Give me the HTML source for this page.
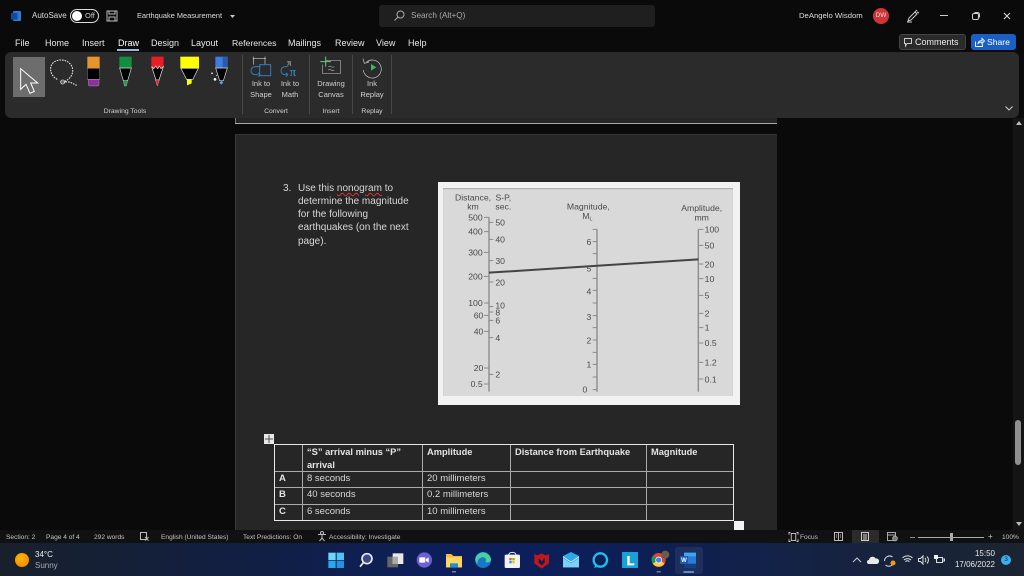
<!DOCTYPE html>
<html><head><meta charset="utf-8">
<style>
html,body{margin:0;padding:0;width:1024px;height:576px;overflow:hidden;background:#0a0a0a}
body{position:relative;font-family:"Liberation Sans",sans-serif;color:#ddd;filter:blur(.25px)}
.a,.t{position:absolute}
.t{white-space:nowrap;line-height:12px}
.tab{font-size:9px;top:37px;color:#e8e8e8}
.rb{font-size:7.5px;color:#d0d0d0;transform:translateX(-50%);text-align:center}
.st{font-size:6.6px;top:531.5px;color:#c4c4c4}
.b{font-size:10px;color:#d8d8d8;left:298px}
.c{position:absolute;font-size:9.5px;line-height:12px;color:#d8d8d8;white-space:nowrap}
.h{font-weight:bold;color:#e4e4e4}
svg{position:absolute;overflow:visible}
</style></head><body>

<!-- doc area -->
<div class="a" style="left:235px;top:118px;width:542px;height:5px;background:#262626;border-left:1px solid #777;box-sizing:border-box"></div>
<div class="a" style="left:235px;top:123px;width:542px;height:1px;background:#a8a8a8"></div>
<div class="a" style="left:235px;top:134px;width:542px;height:396px;background:#262626;border-left:1px solid #3a3a3a;border-top:1px solid #333;box-sizing:border-box"></div>

<!-- title bar -->
<svg style="left:10px;top:10px" width="12" height="12" viewBox="0 0 12 12"><rect x="3" y="1" width="8" height="10" rx="1" fill="#2b7cd3"/><rect x="1" y="3" width="6.5" height="6.5" fill="#134a9e"/></svg>
<div class="t" style="left:32px;top:10px;font-size:8px;color:#ddd">AutoSave</div>
<div class="a" style="left:70px;top:9px;width:29px;height:14px;border:1px solid #ddd;border-radius:8px;box-sizing:border-box"></div>
<div class="a" style="left:72px;top:11px;width:10px;height:10px;background:#fff;border-radius:50%"></div>
<div class="t" style="left:85px;top:10px;font-size:7.5px;color:#ccc">Off</div>
<svg style="left:106px;top:10px" width="12" height="12" viewBox="0 0 12 12" fill="none" stroke="#bbb"><rect x="1" y="1" width="10" height="10"/><rect x="3" y="1" width="6" height="3"/><rect x="3" y="7" width="6" height="4"/></svg>
<div class="t" style="left:137px;top:10px;font-size:7.4px;color:#ddd">Earthquake Measurement</div>
<svg style="left:230px;top:15px" width="5" height="3"><path d="M0 0h5L2.500 3z" fill="#ccc"/></svg>
<div class="a" style="left:379px;top:5px;width:276px;height:22px;background:#1f1f1f;border-radius:3px"></div>
<svg style="left:393px;top:10px" width="12" height="12" viewBox="0 0 12 12" fill="none" stroke="#aaa"><circle cx="7.500" cy="4.500" r="3.500"/><path d="M5 7L1.500 10.500"/></svg>
<div class="t" style="left:411px;top:10px;font-size:8.200px;color:#aaa">Search (Alt+Q)</div>
<div class="t" style="left:799px;top:10px;font-size:7.700px;color:#ddd">DeAngelo Wisdom</div>
<div class="a" style="left:873px;top:8px;width:16px;height:16px;border-radius:50%;background:#d13438;color:#f5dada;font-size:6.500px;line-height:16px;text-align:center">DW</div>
<svg style="left:906px;top:9px" width="14" height="14" viewBox="0 0 14 14" fill="none" stroke="#ccc"><path d="M2 12l1-3 6-6 2 2-6 6zM9 3l2-2M1 13h5M11 3l2 1"/></svg>
<div class="a" style="left:940px;top:15px;width:8px;height:1px;background:#ccc"></div>
<svg style="left:971px;top:11px" width="10" height="10" fill="none" stroke="#ccc"><rect x="1.500" y="2.500" width="6" height="6" rx="1.500"/><path d="M3.500 1.500h3a2 2 0 0 1 2 2v3"/></svg>
<svg style="left:1003px;top:12px" width="8" height="8" stroke="#ddd"><path d="M1 1l6 6M7 1L1 7"/></svg>

<!-- tabs -->
<div class="t tab" style="left:15px">File</div>
<div class="t tab" style="left:45px">Home</div>
<div class="t tab" style="left:82px">Insert</div>
<div class="t tab" style="left:118px;color:#fff">Draw</div>
<div class="a" style="left:117px;top:49px;width:22px;height:2px;background:#9db8e0"></div>
<div class="t tab" style="left:151px">Design</div>
<div class="t tab" style="left:191px">Layout</div>
<div class="t tab" style="left:232px;font-size:8.700px">References</div>
<div class="t tab" style="left:288px">Mailings</div>
<div class="t tab" style="left:335px">Review</div>
<div class="t tab" style="left:376px">View</div>
<div class="t tab" style="left:408px">Help</div>

<div class="a" style="left:899px;top:34px;width:67px;height:16px;background:#2a2a2a;border:1px solid #444;border-radius:3px;box-sizing:border-box"></div>
<svg style="left:904px;top:38px" width="9" height="9" fill="none" stroke="#ccc"><path d="M.5.500h7v5H3L1.500 8V5.500H.5z"/></svg>
<div class="t" style="left:915px;top:36px;font-size:9px;color:#eee">Comments</div>
<div class="a" style="left:971px;top:34px;width:45px;height:16px;background:#1b5fc4;border-radius:3px"></div>
<svg style="left:975px;top:38px" width="10" height="9" fill="none" stroke="#e8f0ff"><path d="M.5 3.500v5h7V6M3 5.500c0-2 2-3 4-3V.5l2.500 2.500L7 5.500V4C5 4 4 4.500 3 5.500z"/></svg>
<div class="t" style="left:987px;top:36px;font-size:8.600px;color:#fff">Share</div>

<!-- ribbon -->
<div class="a" style="left:5px;top:52px;width:1014px;height:66px;background:#2b2b2b;border-radius:6px"></div>
<div class="a" style="left:13px;top:57px;width:32px;height:40px;background:#6d6d6d"></div>
<svg style="left:0;top:50px" width="240" height="70" viewBox="0 0 720 210">
 <path d="M62 56L62 118L78 103L90 130L103 124L92 99L113 99z" fill="none" stroke="#fff" stroke-width="3"/>
 <path d="M172 88C150 78 146 50 160 38C178 22 214 30 218 58C220 74 208 90 190 96M196 96C210 94 216 100 230 106" fill="none" stroke="#eee" stroke-width="3" stroke-dasharray="5 3"/>
 <circle cx="188" cy="96" r="6" fill="none" stroke="#ddd" stroke-width="2.500"/><path d="M182 96h12" stroke="#ddd" stroke-width="2"/>
 <rect x="262" y="20" width="37" height="35" fill="#e6952a"/><rect x="262" y="55" width="37" height="33" fill="#000" stroke="#ccc" stroke-width="1"/><path d="M265 88h32v16a4 4 0 0 1-4 4h-24a4 4 0 0 1-4-4z" fill="#8e2fa0" stroke="#bbb"/>
 <rect x="358" y="20" width="37" height="34" fill="#0f8f3f"/><path d="M359 54h35l-11 38h-13z" fill="#000" stroke="#ddd" stroke-width="2"/><path d="M370 92h13l-4 16h-6z" fill="#17a34a" stroke="#ddd"/>
 <path d="M454 20h37v28l-9 10-5-8-5 8-6-8-6 8-6-6z" fill="#ea1c24"/><path d="M455 50l6 6 6-8 6 8 5-8 5 8 7-6-13 40h-9z" fill="#000" stroke="#eee" stroke-width="2"/><path d="M466 90h12l-6 18z" fill="#ea1c24" stroke="#ddd"/>
 <rect x="541" y="20" width="56" height="35" fill="#ff0"/><path d="M543 55h52l-16 32v1h-20v-1z" fill="#000" stroke="#ddd" stroke-width="2"/><path d="M561 88h14v12l-14 6z" fill="#ff0"/>
 <rect x="646" y="20" width="37" height="34" fill="#3b7de0"/><rect x="668" y="20" width="15" height="34" fill="#2c5aa8"/><path d="M647 54h35l-12 38h-11z" fill="#000" stroke="#ddd" stroke-width="2"/><path d="M664 92l6 6-6 6-6-6z" fill="#4aa3ff"/>
 <circle cx="645" cy="88" r="4" fill="#fff"/><circle cx="636" cy="70" r="2.500" fill="#fff"/><circle cx="650" cy="76" r="1.500" fill="#fff"/>
</svg>
<svg style="left:235px;top:50px" width="170" height="70" viewBox="0 0 510 210" fill="none">
 <path d="M53 25h40M56 20v24M90 20v24" stroke="#ccc" stroke-width="2"/>
 <rect x="74" y="44" width="33" height="33" stroke="#2f7fc0" stroke-width="3"/>
 <path d="M76 50H60a10 10 0 0 0 0 24h10M70 68l5 6-5 6" stroke="#2f7fc0" stroke-width="3"/>
 <text x="156" y="46" font-family="Liberation Serif" font-size="26" fill="#ddd">π</text>
 <text x="164" y="78" font-family="Liberation Serif" font-size="38" fill="#2f9fe0">π</text>
 <path d="M158 50h-8a10 10 0 0 0 0 24h8M153 68l5 6-5 6" stroke="#2f7fc0" stroke-width="3"/>
 <path d="M272 32h45v38h-55V44" stroke="#aaa" stroke-width="2"/>
 <path d="M272 20v30M256 35h32" stroke="#5fd07a" stroke-width="3"/>
 <path d="M280 50c6-6 10 6 18 0M280 60c6-6 10 6 18 0" stroke="#aaa" stroke-width="2"/>
 <path d="M395 36a27 27 0 1 1-10 24M384 26l4 14 14-4" stroke="#ccc" stroke-width="2"/>
 <path d="M408 42l16 10-16 10z" fill="#3fb860"/>
</svg>
<div class="a" style="left:242px;top:55px;width:1px;height:59px;background:#484848"></div>
<div class="a" style="left:309px;top:55px;width:1px;height:59px;background:#484848"></div>
<div class="a" style="left:352px;top:55px;width:1px;height:59px;background:#484848"></div>
<div class="a" style="left:391px;top:55px;width:1px;height:59px;background:#484848"></div>
<div class="t rb" style="left:261px;top:79px;line-height:10.500px">Ink to<br>Shape</div>
<div class="t rb" style="left:290px;top:79px;line-height:10.500px">Ink to<br>Math</div>
<div class="t rb" style="left:331px;top:79px;line-height:10.500px">Drawing<br>Canvas</div>
<div class="t rb" style="left:372px;top:79px;line-height:10.500px">Ink<br>Replay</div>
<div class="t rb" style="left:125px;top:106px;font-size:6.800px">Drawing Tools</div>
<div class="t rb" style="left:276px;top:106px;font-size:6.800px">Convert</div>
<div class="t rb" style="left:331px;top:106px;font-size:6.800px">Insert</div>
<div class="t rb" style="left:372px;top:106px;font-size:6.800px">Replay</div>
<svg style="left:1005px;top:106px" width="8" height="5" fill="none" stroke="#ccc"><path d="M.5.500L4 4 7.500.5"/></svg>

<!-- numbered text -->
<div class="t b" style="left:283px;top:183px">3.</div>
<div class="t b" style="top:183px">Use this <span style="text-decoration:underline wavy #d33 1px">nonogram</span> to</div>
<div class="t b" style="top:196px">determine the magnitude</div>
<div class="t b" style="top:209px">for the following</div>
<div class="t b" style="top:222px">earthquakes (on the next</div>
<div class="t b" style="top:236px">page).</div>

<!-- nomogram -->
<div class="a" style="left:438px;top:182px;width:302px;height:223px;background:#f2f2f2"></div>
<div class="a" style="left:443px;top:188px;width:290px;height:208px;background:#d9d9d9;box-shadow:inset 0 1px 1px #aaa"></div>
<svg style="left:430px;top:175px;filter:blur(.3px)" width="320" height="240" viewBox="0 0 960 720" font-family="Liberation Sans" font-size="26" fill="#4a4a4a">
 <g stroke="#8a8a8a" stroke-width="3" fill="none"><path d="M177 127V650M501 163V650M805 163V650" stroke-width="4"/>
 <path d="M162 127h15M162 170h15M162 232h15M162 304h15M162 384h15M162 421h15M162 469h15M162 579h15M162 627h15"/>
 <path d="M177 142h13M177 193h13M177 257h13M177 321h13M177 395h13M177 411h13M177 436h13M177 488h13M177 598h13"/>
 <path d="M488 163h13M488 200h13M488 236h13M488 272h13M488 310h13M488 346h13M488 384h13M488 422h13M488 458h13M488 495h13M488 532h13M488 568h13M488 606h13M488 644h13"/>
 <path d="M805 163h15M805 211h15M805 267h15M805 311h15M805 361h15M805 415h15M805 458h15M805 504h15M805 562h15M805 612h15"/></g>
 <path d="M177 293L805 253" stroke="#444" stroke-width="6"/>
 <g text-anchor="middle">
 <text x="129" y="77">Distance,</text><text x="129" y="104">km</text><text x="220" y="77">S-P,</text><text x="220" y="104">sec.</text>
 <text x="475" y="104">Magnitude,</text><text x="472" y="132">M<tspan font-size="16" dy="5">L</tspan></text>
 <text x="815" y="108">Amplitude,</text><text x="815" y="136">mm</text></g>
 <g text-anchor="end"><text x="158" y="136">500</text><text x="158" y="179">400</text><text x="158" y="241">300</text><text x="158" y="313">200</text><text x="158" y="393">100</text><text x="160" y="430">60</text><text x="160" y="478">40</text><text x="160" y="588">20</text><text x="158" y="636">0.5</text>
 <text x="484" y="210">6</text><text x="484" y="290">5</text><text x="484" y="359">4</text><text x="484" y="435">3</text><text x="484" y="506">2</text><text x="484" y="578">1</text><text x="472" y="653">0</text></g>
 <text x="196" y="152">50</text><text x="196" y="203">40</text><text x="196" y="267">30</text><text x="196" y="331">20</text><text x="196" y="400">10</text><text x="196" y="421">8</text><text x="196" y="446">6</text><text x="196" y="498">4</text><text x="196" y="607">2</text>
 <text x="824" y="172">100</text><text x="824" y="220">50</text><text x="824" y="277">20</text><text x="824" y="321">10</text><text x="824" y="371">5</text><text x="824" y="424">2</text><text x="824" y="467">1</text><text x="824" y="513">0.5</text><text x="824" y="572">1.2</text><text x="824" y="622">0.1</text>
</svg>

<!-- table -->
<div class="a" style="left:264px;top:434px;width:10px;height:10px;background:#e8e8e8"></div>
<svg style="left:265px;top:435px" width="8" height="8" stroke="#555"><path d="M4 0v8M0 4h8"/></svg>
<div class="a" style="left:274px;top:444px;width:460px;height:77px;border:1px solid #e8e8e8;box-sizing:border-box"></div>
<div class="a" style="left:302px;top:445px;width:1px;height:75px;background:#aaa"></div>
<div class="a" style="left:422px;top:445px;width:1px;height:75px;background:#aaa"></div>
<div class="a" style="left:510px;top:445px;width:1px;height:75px;background:#aaa"></div>
<div class="a" style="left:646px;top:445px;width:1px;height:75px;background:#aaa"></div>
<div class="a" style="left:275px;top:471px;width:458px;height:1px;background:#aaa"></div>
<div class="a" style="left:275px;top:487px;width:458px;height:1px;background:#aaa"></div>
<div class="a" style="left:275px;top:504px;width:458px;height:1px;background:#aaa"></div>
<div class="c h" style="left:307px;top:446px;font-size:9.300px">“S” arrival minus “P”</div>
<div class="c h" style="left:307px;top:459px;font-size:9.300px">arrival</div>
<div class="c h" style="left:427px;top:446px;font-size:9.300px">Amplitude</div>
<div class="c h" style="left:515px;top:446px;font-size:9.300px">Distance from Earthquake</div>
<div class="c h" style="left:651px;top:446px;font-size:9.300px">Magnitude</div>
<div class="c h" style="left:279px;top:473px">A</div>
<div class="c h" style="left:279px;top:489px">B</div>
<div class="c h" style="left:279px;top:506px">C</div>
<div class="c" style="left:307px;top:473px">8 seconds</div>
<div class="c" style="left:307px;top:489px">40 seconds</div>
<div class="c" style="left:307px;top:506px">6 seconds</div>
<div class="c" style="left:427px;top:473px">20 millimeters</div>
<div class="c" style="left:427px;top:489px">0.2 millimeters</div>
<div class="c" style="left:427px;top:506px">10 millimeters</div>
<div class="a" style="left:734px;top:521px;width:10px;height:9px;background:#f4f4f4"></div>

<!-- scrollbar -->
<div class="a" style="left:1013px;top:118px;width:11px;height:412px;background:#141414"></div>
<svg style="left:1015px;top:120px" width="8" height="6"><path d="M1 5L4 1l3 4z" fill="#bbb"/></svg>
<div class="a" style="left:1015px;top:420px;width:6px;height:45px;background:#8f8f8f;border-radius:3px"></div>
<svg style="left:1015px;top:521px" width="8" height="6"><path d="M1 1h6L4 5z" fill="#bbb"/></svg>

<!-- status bar -->
<div class="a" style="left:0;top:530px;width:1024px;height:13px;background:#111"></div>
<div class="t st" style="left:6px">Section: 2</div>
<div class="t st" style="left:46px">Page 4 of 4</div>
<div class="t st" style="left:94px">292 words</div>
<svg style="left:140px;top:532px" width="9" height="9" fill="none" stroke="#bbb"><path d="M.5.500h6v7h-6zM5 5l3.500 3.500M8.500 5L5 8.500"/></svg>
<div class="t st" style="left:161px">English (United States)</div>
<div class="t st" style="left:243px">Text Predictions: On</div>
<svg style="left:317px;top:531px" width="10" height="11" fill="none" stroke="#bbb"><circle cx="5" cy="2" r="1.500"/><path d="M1 3.500h8M5 4v3M2.500 10L5 7l2.500 3"/></svg>
<div class="t st" style="left:329px">Accessibility: Investigate</div>
<svg style="left:789px;top:532px" width="9" height="10" viewBox="0 0 10 11" fill="none" stroke="#ccc"><path d="M2.500 1.500h5v8h-5zM0 3V.5h1.500M10 3V.5H8.500M0 8v2.500h1.500M10 8v2.500H8.500"/></svg>
<div class="t st" style="left:800px">Focus</div>
<svg style="left:834px;top:532px" width="9" height="9" fill="none" stroke="#bbb"><path d="M.5.500h8v8h-8zM4.500.5v8M2 3h1M6 3h1M2 5h1M6 5h1"/></svg>
<div class="a" style="left:852px;top:530px;width:27px;height:13px;background:#2b2b2b"></div>
<svg style="left:861px;top:532px" width="8" height="9" fill="none" stroke="#ccc"><path d="M.5.500h7v8h-7zM2 3h4M2 5h4M2 7h4"/></svg>
<svg style="left:887px;top:532px" width="11" height="9" fill="none" stroke="#aaa"><path d="M.5.500h8v8h-8zM.5 3h8"/><circle cx="8" cy="6.500" r="2.300" fill="#777"/></svg>
<div class="a" style="left:910px;top:537px;width:5px;height:1px;background:#888"></div>
<div class="a" style="left:918px;top:537px;width:66px;height:1px;background:#aaa"></div>
<div class="a" style="left:950px;top:533px;width:3px;height:8px;background:#aaa"></div>
<div class="t st" style="left:988px;top:531px;font-size:8px">+</div>
<div class="t st" style="left:1002px">100%</div>

<!-- taskbar -->
<div class="a" style="left:0;top:543px;width:1024px;height:33px;background:linear-gradient(90deg,#18202c 0%,#111f44 25%,#0c1f5c 45%,#0d1f56 62%,#142244 78%,#1b2430 100%)"></div>
<div class="a" style="left:15px;top:553px;width:14px;height:14px;border-radius:50%;background:radial-gradient(circle at 40% 35%,#ffb400,#f08000)"></div>
<div class="t" style="left:35px;top:549px;font-size:8px;color:#eee">34°C</div>
<div class="t" style="left:35px;top:560px;font-size:8px;color:#aaa">Sunny</div>
<div class="a" style="left:675px;top:547px;width:28px;height:27px;background:rgba(255,255,255,.07);border-radius:3px"></div>
<svg style="left:310px;top:540px" width="400" height="36" viewBox="0 0 1200 108">
 <g fill="#38b6f2"><rect x="55" y="38" width="22" height="22" fill="#6fd3fb"/><rect x="80" y="38" width="22" height="22" fill="#4fc3f7"/><rect x="55" y="62" width="22" height="22" fill="#2aa8ee"/><rect x="80" y="62" width="22" height="22" fill="#1f94e0"/></g>
 <circle cx="171" cy="56" r="15" fill="#3a4a88" stroke="#e8e8e8" stroke-width="5"/><path d="M160 68L150 80" stroke="#e8e8e8" stroke-width="5"/>
 <rect x="232" y="50" width="32" height="32" fill="#666"/><rect x="248" y="40" width="32" height="32" fill="#e8e8e8"/><rect x="248" y="50" width="16" height="22" fill="#aaa"/>
 <circle cx="343" cy="60" r="23" fill="#6e5fd6"/><rect x="328" y="52" width="18" height="16" rx="2" fill="#fff"/><path d="M348 57l8-5v16l-8-5z" fill="#fff"/>
 <path d="M408 42h16l6 6h26v34h-48z" fill="#f5b93f"/><rect x="408" y="52" width="48" height="30" fill="#ffd666"/><rect x="420" y="70" width="24" height="12" fill="#1f8fd6"/><rect x="426" y="94" width="12" height="3" fill="#aaa"/>
 <circle cx="519" cy="60" r="24" fill="#1777c9"/><path d="M497 52a24 24 0 0 1 46 6c0 10-14 12-18 6 8 0 2-14-8-12-10 0-16 10-14 20-6-6-8-14-6-20z" fill="#4ad0a0"/>
 <rect x="584" y="44" width="46" height="40" rx="4" fill="#f2f2f2"/><path d="M596 46c0-12 22-12 22 0" fill="none" stroke="#f2f2f2" stroke-width="3"/><rect x="598" y="54" width="7" height="7" fill="#f25022"/><rect x="607" y="54" width="7" height="7" fill="#7fba00"/><rect x="598" y="63" width="7" height="7" fill="#00a4ef"/><rect x="607" y="63" width="7" height="7" fill="#ffb900"/>
 <path d="M673 42l9 4 13-6 13 6 9-4v28l-22 16-22-16z" fill="#c01818"/><path d="M686 54l9 10 9-10v14l-9 8-9-8z" fill="#0c1f5c"/>
 <path d="M759 48l24-12 24 12v34h-48z" fill="#2ea8e8"/><path d="M759 54l24 16 24-16v28h-48z" fill="#7fd0f7"/><path d="M759 50l24 16 24-16" fill="none" stroke="#fff" stroke-width="2"/>
 <circle cx="871" cy="60" r="20" fill="none" stroke="#19c4f0" stroke-width="7"/><path d="M856 76l-4 8 14-4z" fill="#19c4f0"/>
 <rect x="936" y="36" width="48" height="48" fill="#1aa0d8"/><path d="M952 48h7v22h14v6h-21z" fill="#fff"/>
 <circle cx="1046" cy="60" r="21" fill="#db4437"/><path d="M1046 60l18 10a21 21 0 0 1-36 0z" fill="#ffcd40"/><path d="M1046 60l-18 10a21 21 0 0 1 0-22z" fill="#0f9d58"/><circle cx="1046" cy="60" r="9" fill="#4285f4" stroke="#fff" stroke-width="2"/><circle cx="1066" cy="44" r="12" fill="#6d5a48"/><rect x="1040" y="94" width="12" height="3" fill="#aaa"/>
 <rect x="1122" y="38" width="36" height="44" rx="3" fill="#2b7cd3"/><rect x="1122" y="38" width="36" height="11" fill="#41a5ee"/><rect x="1122" y="71" width="36" height="11" fill="#103f91"/><rect x="1110" y="48" width="24" height="24" rx="2" fill="#185abd"/><text x="1122" y="66" font-family="Liberation Sans" font-size="18" font-weight="bold" fill="#fff" text-anchor="middle">W</text>
 <rect x="1120" y="94" width="32" height="4" rx="2" fill="#7fc8f8"/>
</svg>

<!-- tray -->
<svg style="left:852px;top:557px" width="10" height="6" fill="none" stroke="#ccc"><path d="M1 5l4-4 4 4"/></svg>
<svg style="left:867px;top:556px" width="12" height="8"><path d="M2 8a2 2 0 0 1 0-4 3.500 3.500 0 0 1 6.500-1.500A2.800 2.800 0 0 1 10 8z" fill="#e8e8e8"/></svg>
<svg style="left:883px;top:554px" width="14" height="13" fill="none" stroke="#ddd"><path d="M1.500 7a5 5 0 0 1 8-4M10 10a5 5 0 0 1-7.500 1"/><circle cx="10" cy="9" r="2.500" fill="#f59a10" stroke="none"/></svg>
<svg style="left:902px;top:555px" width="11" height="9" fill="none" stroke="#ddd"><path d="M.5 3a7 7 0 0 1 10 0M2 5a5 5 0 0 1 7 0M3.500 6.700a2.500 2.500 0 0 1 4 0"/></svg>
<svg style="left:918px;top:555px" width="11" height="10" fill="none" stroke="#ddd"><path d="M.5 3.500h2L5 1v8L2.500 6.500h-2zM7 3a3 3 0 0 1 0 4M9 1.500a5 5 0 0 1 0 7"/></svg>
<svg style="left:934px;top:555px" width="11" height="10" fill="none" stroke="#ddd"><path d="M2.500 2.500h6v5h-6zM9 4h1.500v2H9"/><rect x="0" y="0" width="4" height="4" fill="#eee" stroke="none"/></svg>
<div class="t" style="right:29px;top:548px;font-size:8px;color:#e8e8e8">15:50</div>
<div class="t" style="right:29px;top:559px;font-size:8px;color:#e8e8e8">17/06/2022</div>
<div class="a" style="left:1001px;top:555px;width:10px;height:10px;border-radius:50%;background:#3ab0f0;color:#123;font-size:6.500px;line-height:10px;text-align:center">3</div>

</body></html>
